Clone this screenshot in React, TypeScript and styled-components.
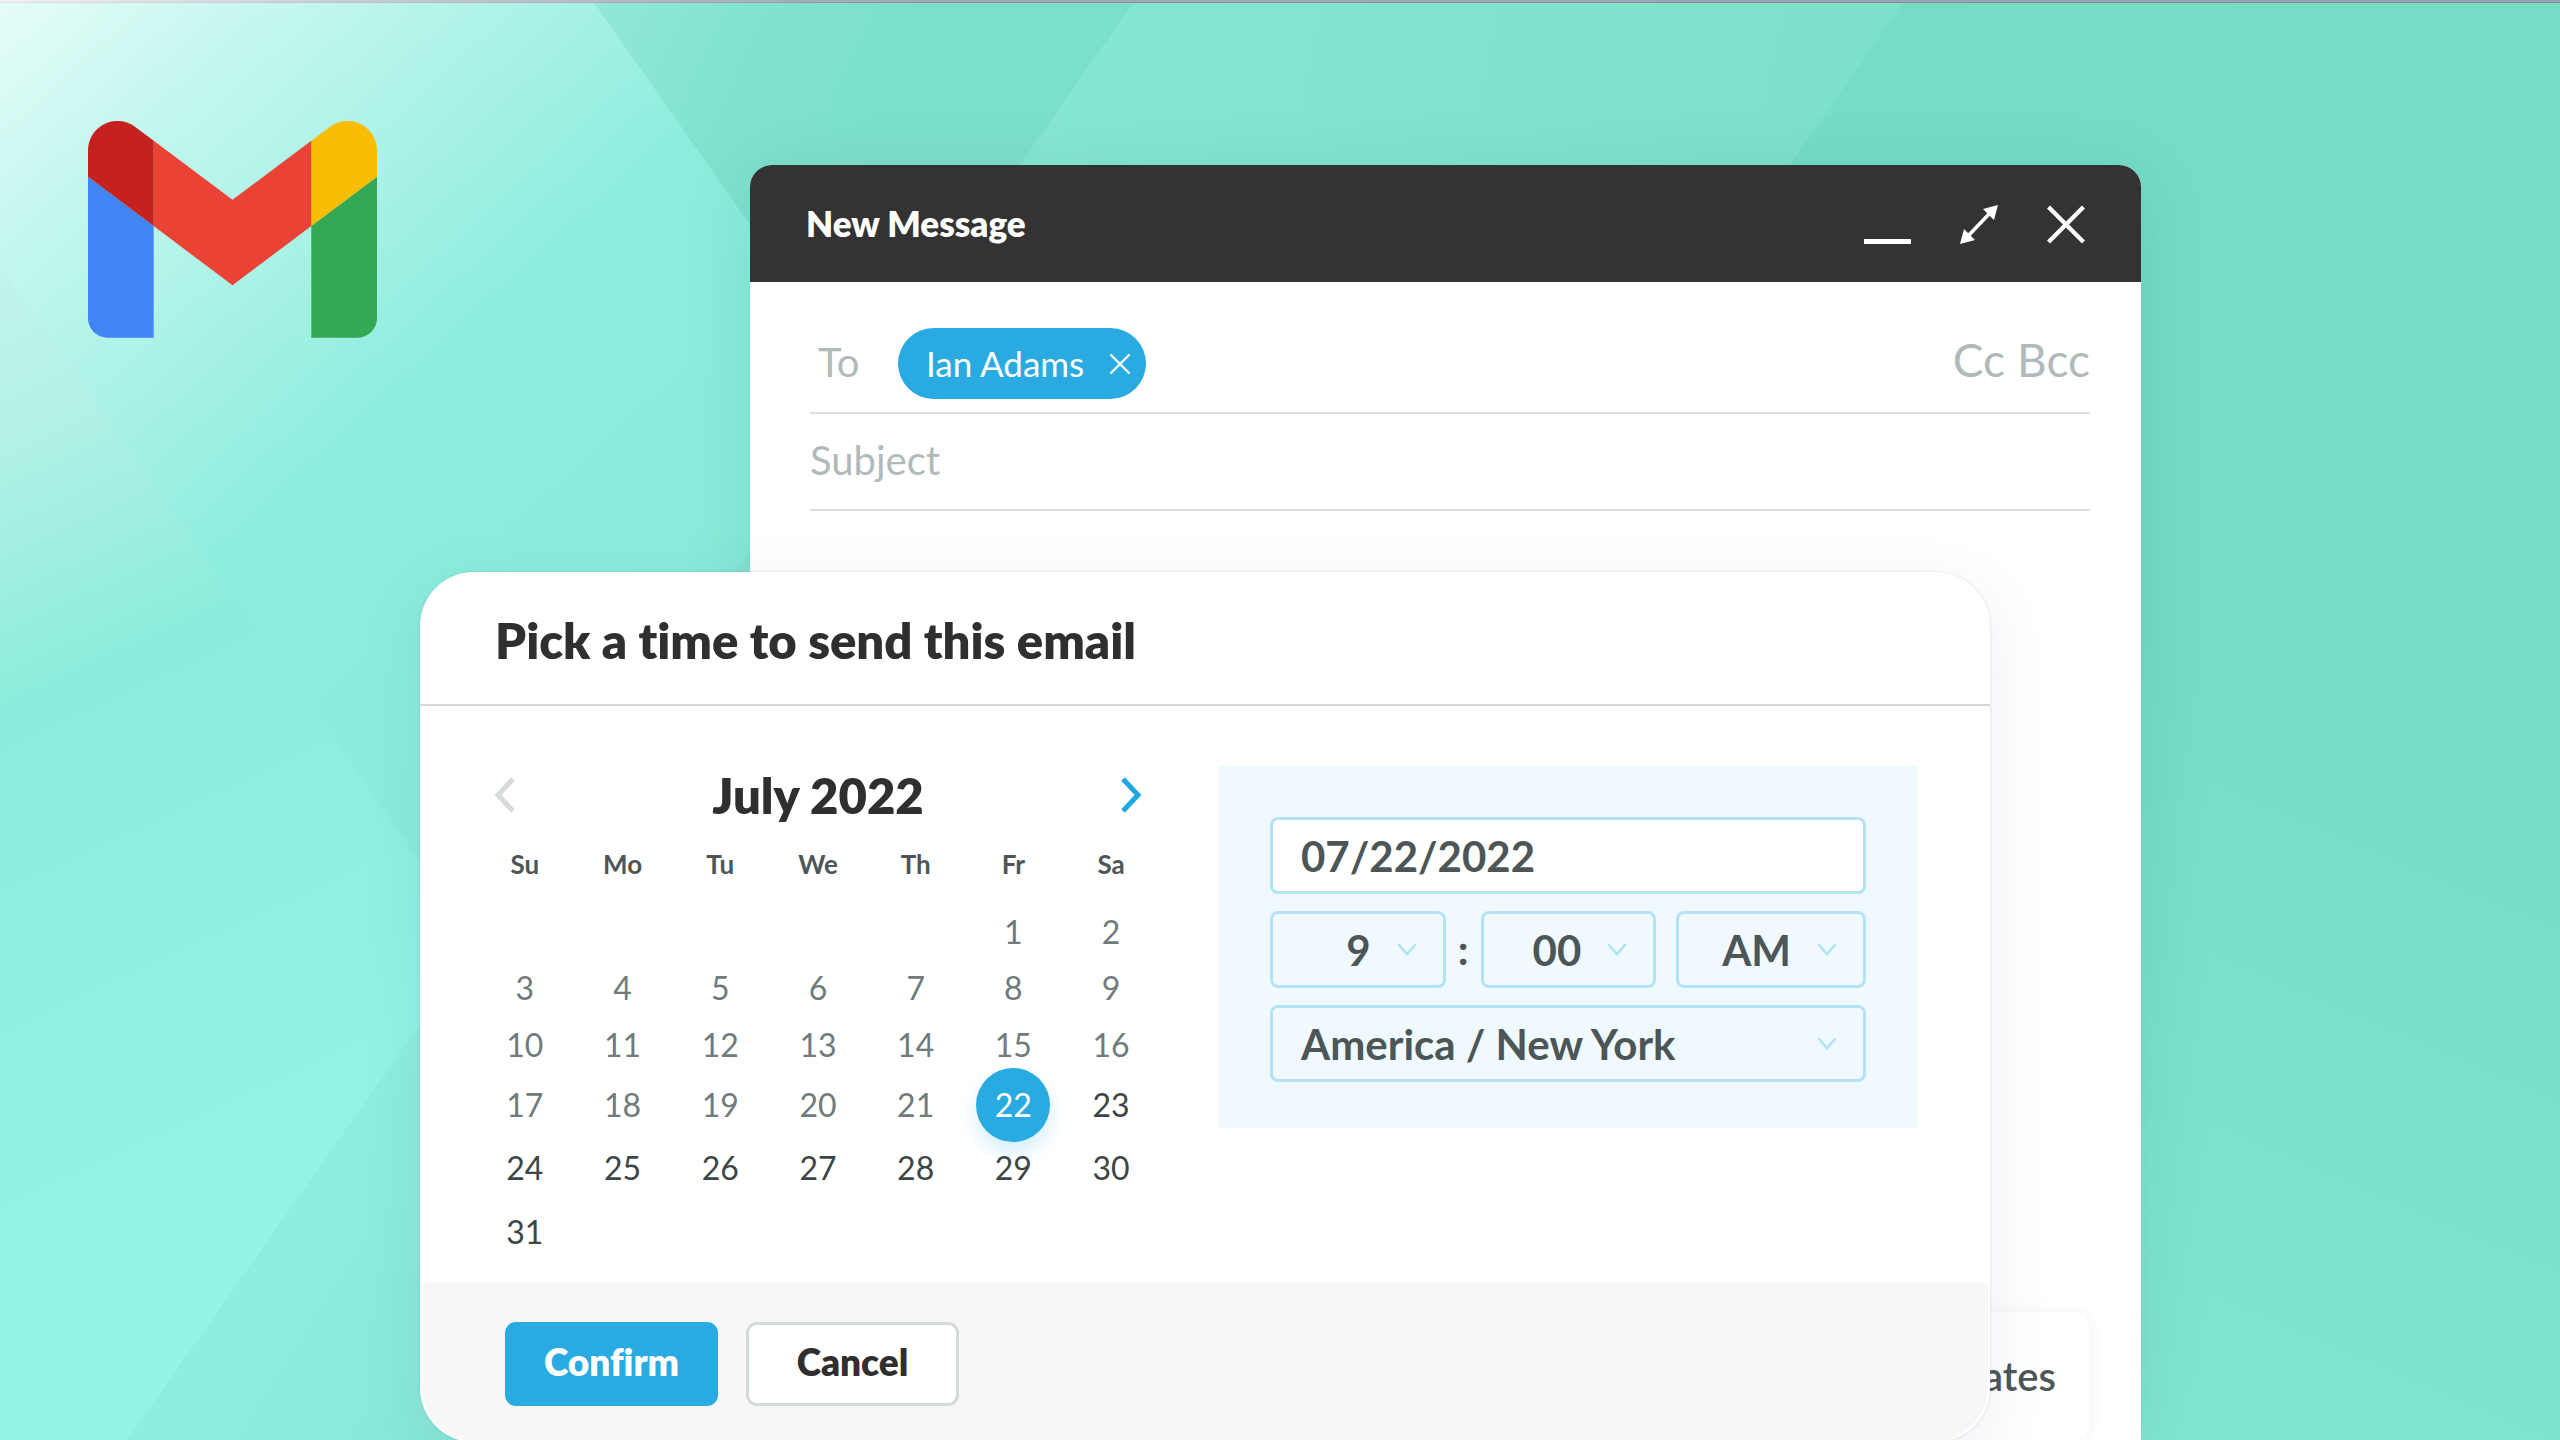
import React, { useState } from 'react';
import styled, { createGlobalStyle, css } from 'styled-components';

const color = {
  ink: '#2f2f2f',
  text: '#4d5657',
  past: '#6f7b7c',
  future: '#3d4647',
  muted: '#b0baba',
  line: '#d8dfe1',
  accent: '#29abe2',
  field: '#b5e3f6',
  panel: '#f0f9fe',
};

const GlobalStyle = createGlobalStyle`
  *, *::before, *::after { box-sizing: border-box; }
  html, body { margin: 0; height: 100%; }
  body { background: #82e4d1; overflow: hidden; font-variant-ligatures: none; }
  body, button, input, select {
    font-family: Lato, 'Open Sans', sans-serif;
  }
  button { border: 0; padding: 0; background: none; cursor: pointer; font-variant-ligatures: none; }
  svg { display: block; }
`;

const Stage = styled.main`
  position: relative;
  display: grid;
  grid-template-columns:
    minmax(0, 420fr) minmax(0, 330fr) minmax(0, 1240fr)
    minmax(0, 151fr) minmax(0, 419fr);
  height: 100vh;
  overflow: hidden;
`;

const Backdrop = styled.svg`
  position: absolute;
  inset: 0;
  width: 100%;
  height: 100%;
`;

const TopEdge = styled.div`
  position: absolute;
  inset: 0 0 auto 0;
  height: 3px;
  background:
    linear-gradient(90deg, #e4e0da 0, #b9bab2 18%, #8e8f84 36%) bottom / 100% 1px no-repeat,
    linear-gradient(90deg, #f1eff4 0, #c3cbd9 14%, #a3abc0 32%, #959fbb 100%);
`;

const Logo = styled.svg`
  position: relative;
  grid-area: 1 / 1;
  width: 289px;
  margin: 121px 0 0 88px;
`;

/* Compose window */

const Compose = styled.section`
  position: relative;
  grid-area: 1 / 3 / 2 / 5;
  display: flex;
  flex-direction: column;
  margin-top: 165px;
  border-radius: 22px 22px 0 0;
  background: #fff;
  box-shadow: 0 12px 70px rgba(30, 90, 90, 0.12);
`;

const ComposeBar = styled.header`
  display: flex;
  align-items: center;
  justify-content: space-between;
  height: 117px;
  padding: 2px 56px 0;
  border-radius: 22px 22px 0 0;
  background: #333;
  color: #fff;
`;

const ComposeTitle = styled.h1`
  margin: 0;
  padding-bottom: 4px;
  font-size: 35px;
  font-weight: 800;
  line-height: 44px;
`;

const WindowActions = styled.div`
  display: flex;
  gap: 49px;
`;

const Fields = styled.div`
  padding: 0 51px 0 60px;
`;

const ToRow = styled.div`
  display: flex;
  align-items: center;
  padding: 46px 0 13px 8px;
  border-bottom: 2px solid ${color.line};
`;

const FieldName = styled.span`
  flex: 0 0 80px;
  padding-bottom: 4px;
  color: ${color.muted};
  font-size: 40px;
  line-height: 48px;
`;

const Chip = styled.span`
  display: flex;
  align-items: center;
  gap: 26px;
  height: 71px;
  padding: 0 16px 0 28px;
  border-radius: 36px;
  background: ${color.accent};
  color: #fff;
  font-size: 35px;
  line-height: 44px;
`;

const ChipName = styled.span`
  padding-bottom: 2px;
`;

const CopyLinks = styled.div`
  display: flex;
  align-self: flex-start;
  gap: 12px;
  margin-left: auto;
  padding-top: 4px;
`;

const CopyLink = styled.button`
  color: ${color.muted};
  font-size: 46px;
  line-height: 56px;
`;

const SubjectInput = styled.input`
  display: block;
  width: 100%;
  height: 97px;
  padding: 0 0 4px;
  border: 0;
  border-bottom: 2px solid ${color.line};
  outline: 0;
  background: none;
  color: ${color.text};
  font-size: 40px;
  &::placeholder { color: ${color.muted}; opacity: 1; }
`;

const ComposeFoot = styled.div`
  display: flex;
  justify-content: flex-end;
  margin-top: auto;
  padding: 0 51px 2px;
`;

const TemplatesButton = styled.button`
  height: 128px;
  padding: 0 34px;
  border-radius: 18px;
  background: #fff;
  box-shadow: 0 0 14px rgba(40, 60, 80, 0.07);
  color: ${color.text};
  font-size: 40px;
  font-weight: 600;
`;

/* Scheduling dialog */

const Dialog = styled.section`
  position: relative;
  grid-area: 1 / 2 / 2 / 4;
  align-self: start;
  margin-top: 572px;
  border-radius: 54px;
  background: #fff;
  box-shadow: 0 16px 60px rgba(70, 100, 150, 0.1), 0 0 3px rgba(90, 100, 160, 0.2);
`;

const DialogHead = styled.header`
  padding: 40px 75px 36px;
  border-bottom: 2px solid #d3d9da;
`;

const heading = css`
  margin: 0;
  color: ${color.ink};
  font-size: 49px;
  font-weight: 800;
  line-height: 56px;
`;

const DialogTitle = styled.h2`
  ${heading}
`;

const DialogBody = styled.div`
  display: flex;
  align-items: flex-start;
  gap: 58px;
  padding: 60px 72px 19px 56px;
`;

const Calendar = styled.div`
  flex: 0 0 684px;
`;

const MonthBar = styled.div`
  display: flex;
  align-items: center;
  justify-content: space-between;
  height: 58px;
  padding: 0 18px;
`;

const MonthName = styled.h3`
  ${heading}
`;

const Days = styled.table`
  width: 100%;
  border-collapse: collapse;
  table-layout: fixed;
`;

const Weekday = styled.th`
  height: 80px;
  padding: 0;
  color: ${color.text};
  font-size: 26px;
  font-weight: 700;
`;

const Week = styled.tr<{ $height: number }>`
  height: ${(p) => p.$height}px;
`;

const DayCell = styled.td`
  padding: 0;
  line-height: 0;
`;

const Day = styled.button<{ $tone: 'past' | 'today' | 'future' }>`
  display: block;
  width: 74px;
  height: 44px;
  margin: 0 auto;
  font-size: 32px;
  line-height: 44px;
  color: ${(p) => (p.$tone === 'past' ? color.past : color.future)};
  ${(p) =>
    p.$tone === 'today' &&
    css`
      height: 74px;
      margin: -15px auto;
      border-radius: 50%;
      background: ${color.accent};
      box-shadow: 0 10px 18px rgba(41, 171, 226, 0.2);
      color: #fff;
    `}
`;

const TimePanel = styled.div`
  flex: 1;
  display: flex;
  flex-direction: column;
  gap: 17px;
  min-width: 0;
  padding: 51px 52px 46px;
  background: ${color.panel};
`;

const fieldBox = css`
  width: 100%;
  height: 77px;
  border: 3px solid ${color.field};
  border-radius: 8px;
  outline: 0;
  color: ${color.text};
  font-size: 42px;
  font-weight: 700;
`;

const DateInput = styled.input`
  ${fieldBox}
  padding: 0 28px;
  background: #fff;
`;

const SelectWrap = styled.span<{ $grow?: number }>`
  position: relative;
  display: block;
  flex: ${(p) => p.$grow ?? 1} 1 0;
`;

const Select = styled.select<{ $end?: boolean }>`
  ${fieldBox}
  display: block;
  appearance: none;
  padding: ${(p) => (p.$end ? '0 72px 0 0' : '0 28px')};
  text-align: ${(p) => (p.$end ? 'right' : 'left')};
  text-align-last: ${(p) => (p.$end ? 'right' : 'left')};
  background: transparent;
`;

const Caret = styled.svg`
  position: absolute;
  top: 32px;
  right: 29px;
  pointer-events: none;
`;

const TimeRow = styled.div`
  display: flex;
`;

const Colon = styled.span`
  flex: 0 0 35px;
  text-align: center;
  color: ${color.text};
  font-size: 42px;
  font-weight: 700;
  line-height: 77px;
`;

const Spacer = styled.span`
  flex: 0 0 20px;
`;

const DialogFoot = styled.footer`
  display: flex;
  gap: 28px;
  height: 159px;
  margin: 0 2px;
  padding: 39px 83px;
  border-radius: 0 0 56px 56px;
  background: #f7f7f7;
`;

const Action = styled.button<{ $primary?: boolean }>`
  width: 213px;
  height: 84px;
  padding-bottom: 6px;
  border: 3px solid ${(p) => (p.$primary ? color.accent : '#d3dbdc')};
  border-radius: 11px;
  background: ${(p) => (p.$primary ? color.accent : '#fff')};
  color: ${(p) => (p.$primary ? '#fff' : color.ink)};
  font-size: 37px;
  font-weight: 800;
`;

const weeks: { height: number; days: (number | null)[] }[] = [
  { height: 56, days: [null, null, null, null, null, 1, 2] },
  { height: 56, days: [3, 4, 5, 6, 7, 8, 9] },
  { height: 58, days: [10, 11, 12, 13, 14, 15, 16] },
  { height: 62, days: [17, 18, 19, 20, 21, 22, 23] },
  { height: 64, days: [24, 25, 26, 27, 28, 29, 30] },
  { height: 64, days: [31, null, null, null, null, null, null] },
];

function Facets() {
  return (
    <Backdrop viewBox="0 0 2560 1440" preserveAspectRatio="none" aria-hidden="true">
      <defs>
        <linearGradient id="glow" gradientUnits="userSpaceOnUse" x1="0" y1="0" x2="620" y2="680">
          <stop offset="0" stopColor="#e6fcf9" />
          <stop offset="0.2" stopColor="#c5f7ef" />
          <stop offset="0.4" stopColor="#abf2e6" />
          <stop offset="0.62" stopColor="#8cedde" />
          <stop offset="1" stopColor="#8aecda" />
        </linearGradient>
        <linearGradient id="left" gradientUnits="userSpaceOnUse" x1="0" y1="270" x2="420" y2="1190">
          <stop offset="0" stopColor="#c3f3ea" />
          <stop offset="0.16" stopColor="#b2f1e6" />
          <stop offset="0.4" stopColor="#8becdb" />
          <stop offset="0.7" stopColor="#8ff1e2" />
          <stop offset="1" stopColor="#93f5e7" />
        </linearGradient>
        <linearGradient id="corner" gradientUnits="userSpaceOnUse" x1="200" y1="1300" x2="420" y2="1440">
          <stop offset="0" stopColor="#8eefde" />
          <stop offset="1" stopColor="#88e9d8" />
        </linearGradient>
        <linearGradient id="second" gradientUnits="userSpaceOnUse" x1="592" y1="0" x2="880" y2="130">
          <stop offset="0" stopColor="#94e8d7" />
          <stop offset="0.5" stopColor="#80e3cf" />
          <stop offset="1" stopColor="#7be0ca" />
        </linearGradient>
        <linearGradient id="third" gradientUnits="userSpaceOnUse" x1="1080" y1="0" x2="1860" y2="160">
          <stop offset="0" stopColor="#86e6d3" />
          <stop offset="1" stopColor="#7ce0cb" />
        </linearGradient>
        <linearGradient id="right" gradientUnits="userSpaceOnUse" x1="2450" y1="760" x2="2160" y2="1440">
          <stop offset="0" stopColor="#75dcc5" />
          <stop offset="1" stopColor="#80e6d2" />
        </linearGradient>
      </defs>
      <rect width="2560" height="1440" fill="url(#glow)" />
      <path d="M0 265 827 1440H0Z" fill="url(#left)" />
      <path d="M127 1440 620 740V1440Z" fill="url(#corner)" />
      <path d="M592 0 1000 580H2560V0Z" fill="url(#second)" />
      <path d="M1135 0 730 580H2560V0Z" fill="url(#third)" />
      <path d="M1905 0 900 1440H2560V0Z" fill="url(#right)" />
    </Backdrop>
  );
}

function GmailLogo() {
  return (
    <Logo viewBox="52 42 88 66" role="img" aria-label="Gmail">
      <path fill="#4285f4" d="M58 108h14V74L52 59v43c0 3.32 2.69 6 6 6" />
      <path fill="#34a853" d="M120 108h14c3.32 0 6-2.69 6-6V59l-20 15" />
      <path fill="#fbbc04" d="M120 48v26l20-15v-8c0-7.42-8.47-11.65-14.4-7.2" />
      <path fill="#ea4335" d="M72 74V48l24 18 24-18v26L96 92" />
      <path fill="#c5221f" d="M52 51v8l20 15V48l-5.6-4.2c-5.94-4.45-14.4-.22-14.4 7.2" />
    </Logo>
  );
}

function Chevron({ dir, stroke }: { dir: 'left' | 'right'; stroke: string }) {
  return (
    <svg width="21" height="36" viewBox="0 0 21 36" fill="none" stroke={stroke} strokeWidth="5">
      <path d={dir === 'left' ? 'M19 2 4 18 19 34' : 'M2 2 17 18 2 34'} />
    </svg>
  );
}

function DropDown(props: {
  label: string;
  options: string[];
  value: string;
  grow?: number;
  end?: boolean;
}) {
  return (
    <SelectWrap $grow={props.grow}>
      <Select aria-label={props.label} defaultValue={props.value} $end={props.end}>
        {props.options.map((o) => (
          <option key={o}>{o}</option>
        ))}
      </Select>
      <Caret width="20" height="13" viewBox="0 0 20 13" fill="none" stroke="#b0e2f7" strokeWidth="2.5" strokeLinecap="round">
        <path d="M2 2 10 11 18 2" />
      </Caret>
    </SelectWrap>
  );
}

export default function App() {
  const [selected, setSelected] = useState(22);
  const tone = (d: number) => (d === selected ? 'today' : d < 22 ? 'past' : 'future');

  return (
    <>
      <GlobalStyle />
      <Stage>
        <Facets />
        <TopEdge />
        <GmailLogo />

        <Compose aria-label="New Message">
          <ComposeBar>
            <ComposeTitle>New Message</ComposeTitle>
            <WindowActions>
              <button aria-label="Minimize">
                <svg width="47" height="39" viewBox="0 0 47 39">
                  <path d="M0 34h47v5H0z" fill="#fff" />
                </svg>
              </button>
              <button aria-label="Full screen">
                <svg width="38" height="39" viewBox="0 0 38 39" fill="#fff">
                  <path d="M38 0 34 15 23 4ZM0 39 4 24 15 35Z" />
                  <path d="M8 31 30 8" stroke="#fff" strokeWidth="3.6" />
                </svg>
              </button>
              <button aria-label="Close">
                <svg width="38" height="39" viewBox="0 0 38 39" stroke="#fff" strokeWidth="4.4">
                  <path d="M1.5 2 36.5 37M36.5 2 1.5 37" />
                </svg>
              </button>
            </WindowActions>
          </ComposeBar>
          <Fields>
            <ToRow>
              <FieldName>To</FieldName>
              <Chip>
                <ChipName>Ian Adams</ChipName>
                <button aria-label="Remove Ian Adams">
                  <svg width="20" height="20" viewBox="0 0 20 20" stroke="#fff" strokeWidth="2.4" strokeLinecap="round">
                    <path d="M1 1 19 19M19 1 1 19" />
                  </svg>
                </button>
              </Chip>
              <CopyLinks>
                <CopyLink>Cc</CopyLink>
                <CopyLink>Bcc</CopyLink>
              </CopyLinks>
            </ToRow>
            <SubjectInput placeholder="Subject" aria-label="Subject" />
          </Fields>
          <ComposeFoot>
            <TemplatesButton>Templates</TemplatesButton>
          </ComposeFoot>
        </Compose>

        <Dialog role="dialog" aria-labelledby="dialog-title">
          <DialogHead>
            <DialogTitle id="dialog-title">Pick a time to send this email</DialogTitle>
          </DialogHead>
          <DialogBody>
            <Calendar>
              <MonthBar>
                <button aria-label="Previous month">
                  <Chevron dir="left" stroke="#d3dbdb" />
                </button>
                <MonthName>July 2022</MonthName>
                <button aria-label="Next month">
                  <Chevron dir="right" stroke="#1ea8e1" />
                </button>
              </MonthBar>
              <Days>
                <thead>
                  <tr>
                    {['Su', 'Mo', 'Tu', 'We', 'Th', 'Fr', 'Sa'].map((d) => (
                      <Weekday key={d} scope="col">{d}</Weekday>
                    ))}
                  </tr>
                </thead>
                <tbody>
                  {weeks.map((w, i) => (
                    <Week key={i} $height={w.height}>
                      {w.days.map((d, j) => (
                        <DayCell key={j}>
                          {d !== null && (
                            <Day $tone={tone(d)} onClick={() => setSelected(d)}>{d}</Day>
                          )}
                        </DayCell>
                      ))}
                    </Week>
                  ))}
                </tbody>
              </Days>
            </Calendar>
            <TimePanel>
              <DateInput defaultValue="07/22/2022" aria-label="Date" />
              <TimeRow>
                <DropDown label="Hour" grow={176} end value="9" options={['8', '9', '10']} />
                <Colon>:</Colon>
                <DropDown label="Minute" grow={176} end value="00" options={['00', '15', '30', '45']} />
                <Spacer />
                <DropDown label="AM or PM" grow={190} end value="AM" options={['AM', 'PM']} />
              </TimeRow>
              <DropDown label="Time zone" value="America / New York" options={['America / New York', 'America / Chicago']} />
            </TimePanel>
          </DialogBody>
          <DialogFoot>
            <Action $primary>Confirm</Action>
            <Action>Cancel</Action>
          </DialogFoot>
        </Dialog>
      </Stage>
    </>
  );
}
